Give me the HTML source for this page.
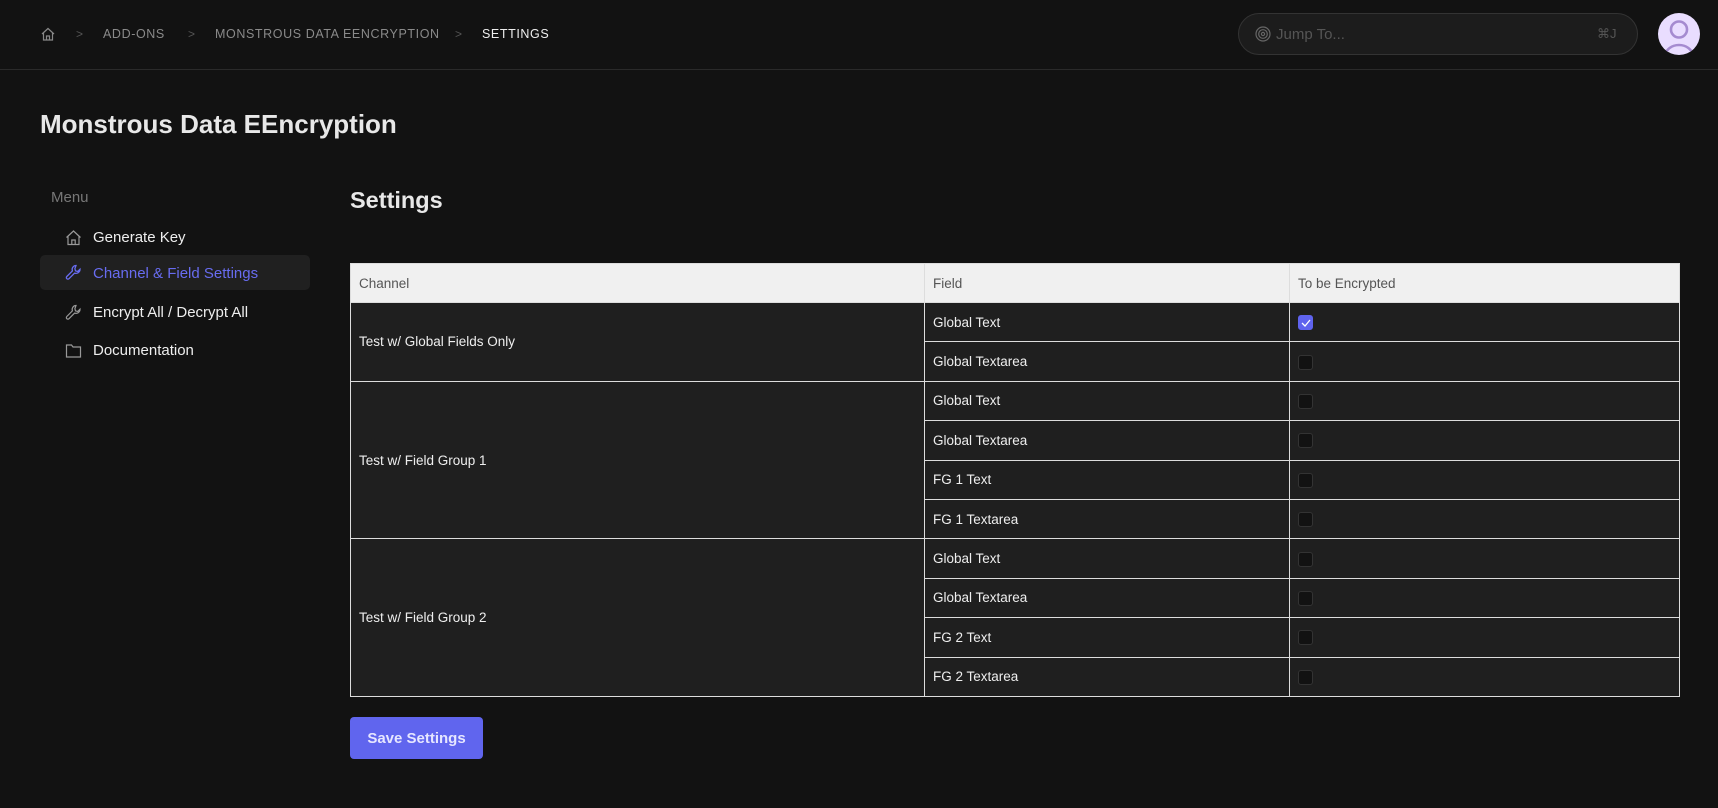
<!DOCTYPE html>
<html><head><meta charset="utf-8"><style>
*{box-sizing:border-box;margin:0;padding:0}
body{width:1718px;height:808px;background:#121212;font-family:"Liberation Sans",sans-serif;color:#eee;position:relative;overflow:hidden}
.hdr{position:absolute;left:0;top:0;width:1718px;height:70px;border-bottom:1px solid #2a2a2a}
.bc{position:absolute;top:27px;font-size:12.5px;letter-spacing:0.6px;color:#8a8a8a}
.sep{position:absolute;top:27px;font-size:12px;color:#555}
.search{position:absolute;left:1238px;top:13px;width:400px;height:42px;border:1px solid #333;border-radius:21px;background:#1c1c1c}
.avatar{position:absolute;left:1658px;top:13px;width:42px;height:42px;border-radius:50%;background:#e9ddff;overflow:hidden}
h1{position:absolute;left:40px;top:109px;font-size:26px;font-weight:bold;color:#e8e8e8}
h2{position:absolute;left:350px;top:187px;font-size:23.5px;font-weight:bold;color:#e8e8e8}
.menu{position:absolute;left:51px;top:189px;font-size:15px;color:#777}
.mi{position:absolute;left:40px;width:270px;height:35px;border-radius:5px;font-size:15px;color:#eee}
.mi span{position:absolute;left:53px;top:9px}
.mi svg{position:absolute;left:25px;top:9px}
table{position:absolute;left:350px;top:263px;width:1330px;border-collapse:collapse;font-size:13.5px}
th{background:#f0f0f0;color:#555;font-weight:normal;text-align:left;height:39px;padding:0 8px;border:1px solid #ddd}
td{background:#1f1f1f;color:#eee;height:39.4px;padding:0 8px;border:1px solid #ddd}
.cb{display:inline-block;width:15px;height:15px;border-radius:3px;background:#121212;border:1px solid #333;vertical-align:middle}
.cb.on{background:#5f63ee;border-color:#5f63ee;position:relative}
.btn{position:absolute;left:350px;top:717px;width:133px;height:42px;border-radius:4px;background:#6065ee;color:#e6e6ff;font-size:15px;font-weight:bold;text-align:center;line-height:44px}
</style></head><body>
<div class="hdr">
<svg style="position:absolute;left:41px;top:27px" width="14" height="14" viewBox="0 0 14 14" fill="none" stroke="#888" stroke-width="1.2"><path d="M1 7L7 1.5 13 7M2.5 5.8V13h9V5.8M5.5 13V9h3v4"/></svg>
<span class="sep" style="left:76px">&gt;</span>
<span class="bc" style="left:103px">ADD-ONS</span>
<span class="sep" style="left:188px">&gt;</span>
<span class="bc" style="left:215px">MONSTROUS DATA EENCRYPTION</span>
<span class="sep" style="left:455px">&gt;</span>
<span class="bc" style="left:482px;color:#eee">SETTINGS</span>
<div class="search">
<svg style="position:absolute;left:16px;top:12px" width="16" height="16" viewBox="0 0 16 16" fill="none" stroke="#666" stroke-width="1.2"><circle cx="8" cy="8" r="7"/><circle cx="8" cy="8" r="4.3"/><circle cx="8" cy="8" r="1.6"/></svg>
<span style="position:absolute;left:37px;top:12px;font-size:15px;color:#555">Jump To...</span>
<span style="position:absolute;left:358px;top:12px;font-size:13px;color:#555">⌘J</span>
</div>
<div class="avatar"><svg width="42" height="42" viewBox="0 0 42 42" fill="none" stroke="#a58bd0" stroke-width="2.6"><circle cx="21" cy="16.5" r="8"/><path d="M6 44c2-8 8-12 15-12s13 4 15 12"/></svg></div>
</div>
<h1>Monstrous Data EEncryption</h1>
<div class="menu">Menu</div>
<div class="mi" style="top:220px"><svg width="17" height="17" viewBox="0 0 17 17" fill="none" stroke="#999" stroke-width="1.2"><path d="M1.5 8.5L8.5 2l7 6.5M3 7.3V15.5h11V7.3M6.8 15.5v-4.5h3.4v4.5"/></svg><span>Generate Key</span></div>
<div class="mi" style="top:255px;background:#202020;color:#686cf0"><svg width="17" height="17" viewBox="0 0 17 17" fill="none" stroke="#686cf0" stroke-width="1.3"><path d="M11 1.5a4 4 0 0 0-3.6 5.4L1.8 12.5a1.5 1.5 0 0 0 2.2 2.2l5.6-5.6A4 4 0 0 0 15 5.2l-2.3 2.3-2.2-.6-.6-2.2z"/></svg><span style="top:10px">Channel &amp; Field Settings</span></div>
<div class="mi" style="top:295px"><svg width="17" height="17" viewBox="0 0 17 17" fill="none" stroke="#999" stroke-width="1.2"><path d="M11 1.5a4 4 0 0 0-3.6 5.4L1.8 12.5a1.5 1.5 0 0 0 2.2 2.2l5.6-5.6A4 4 0 0 0 15 5.2l-2.3 2.3-2.2-.6-.6-2.2z"/></svg><span>Encrypt All / Decrypt All</span></div>
<div class="mi" style="top:333px"><svg width="17" height="17" viewBox="0 0 17 17" fill="none" stroke="#999" stroke-width="1.2"><path d="M1.5 3h5l1.5 2h7.5v10h-14z"/></svg><span>Documentation</span></div>
<h2>Settings</h2>
<table>
<tr><th style="width:574px">Channel</th><th style="width:365px">Field</th><th>To be Encrypted</th></tr>
<tr><td rowspan="2">Test w/ Global Fields Only</td><td>Global Text</td><td><span class="cb on"><svg style="position:absolute;left:2px;top:3px" width="10" height="8" viewBox="0 0 10 8" fill="none" stroke="#fff" stroke-width="1.3"><path d="M1 4l3 3 5-6"/></svg></span></td></tr>
<tr><td>Global Textarea</td><td><span class="cb"></span></td></tr>
<tr><td rowspan="4">Test w/ Field Group 1</td><td>Global Text</td><td><span class="cb"></span></td></tr>
<tr><td>Global Textarea</td><td><span class="cb"></span></td></tr>
<tr><td>FG 1 Text</td><td><span class="cb"></span></td></tr>
<tr><td>FG 1 Textarea</td><td><span class="cb"></span></td></tr>
<tr><td rowspan="4">Test w/ Field Group 2</td><td>Global Text</td><td><span class="cb"></span></td></tr>
<tr><td>Global Textarea</td><td><span class="cb"></span></td></tr>
<tr><td>FG 2 Text</td><td><span class="cb"></span></td></tr>
<tr><td>FG 2 Textarea</td><td><span class="cb"></span></td></tr>
</table>
<div class="btn">Save Settings</div>
</body></html>
